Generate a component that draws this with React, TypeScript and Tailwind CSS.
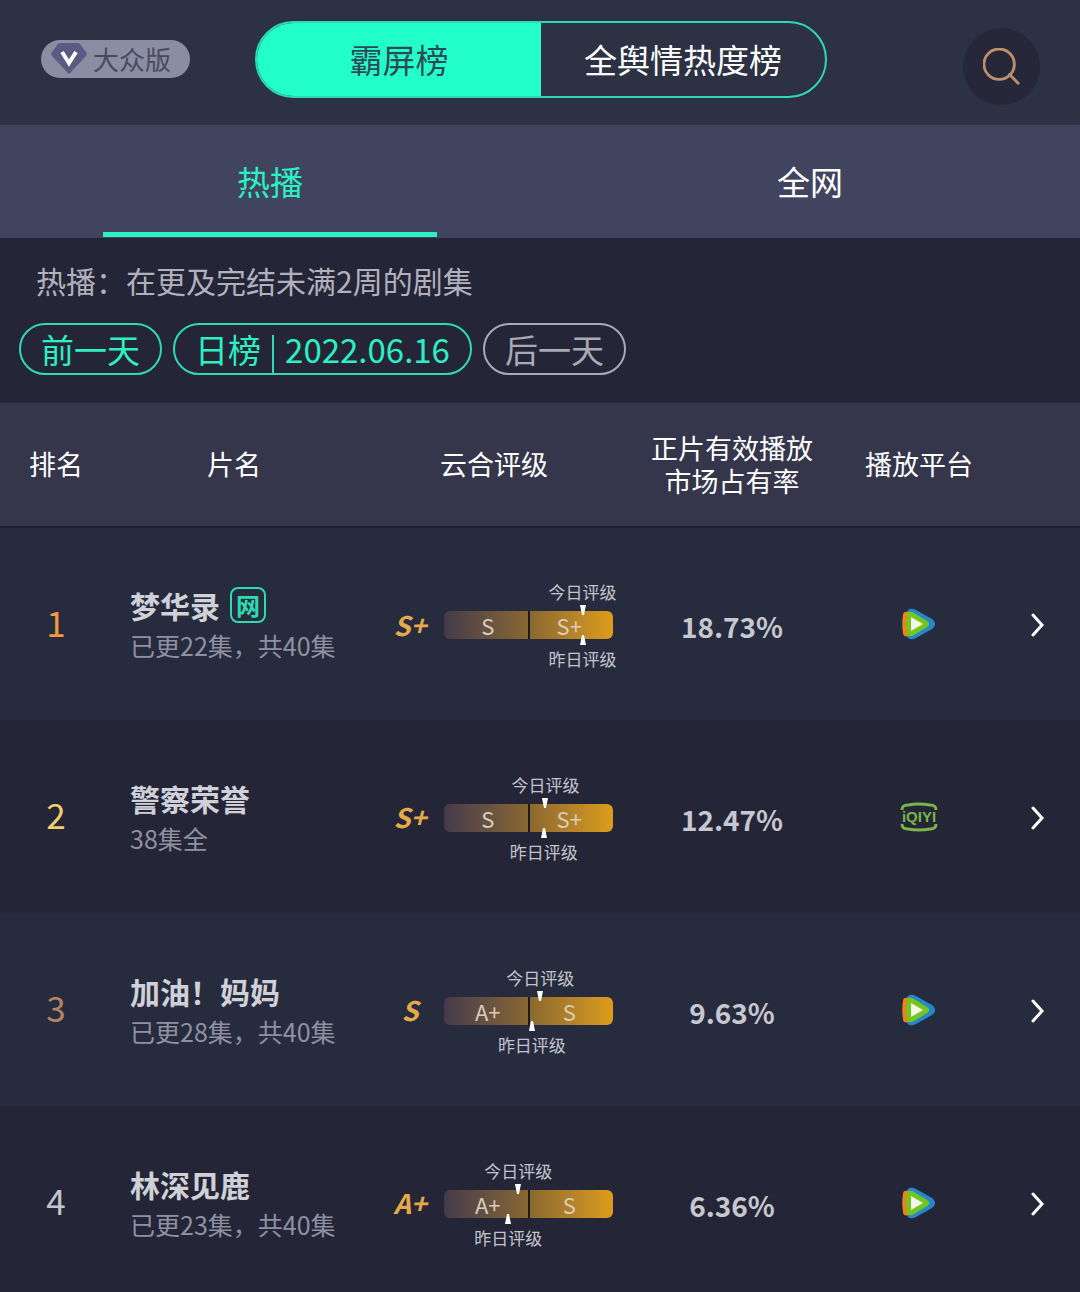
import React from 'react';

type Platform = 'tencent' | 'iqiyi';

interface Show {
  rank: number;
  rankColor: string;
  name: string;
  webOnly?: boolean;
  episodes: string;
  grade: string;
  scale: [string, string];
  // marker positions along the grade bar, in percent
  today: number;
  yesterday: number;
  share: string;
  platform: Platform;
}

const shows: Show[] = [
  { rank: 1, rankColor: 'text-[#f0983c]', name: '梦华录', webOnly: true, episodes: '已更22集，共40集', grade: 'S+', scale: ['S', 'S+'], today: 82, yesterday: 82, share: '18.73%', platform: 'tencent' },
  { rank: 2, rankColor: 'text-[#f2cf6b]', name: '警察荣誉', episodes: '38集全', grade: 'S+', scale: ['S', 'S+'], today: 60, yesterday: 59, share: '12.47%', platform: 'iqiyi' },
  { rank: 3, rankColor: 'text-[#b5835f]', name: '加油！妈妈', episodes: '已更28集，共40集', grade: 'S', scale: ['A+', 'S'], today: 57, yesterday: 52, share: '9.63%', platform: 'tencent' },
  { rank: 4, rankColor: 'text-[#c3c4cc]', name: '林深见鹿', episodes: '已更23集，共40集', grade: 'A+', scale: ['A+', 'S'], today: 44, yesterday: 38, share: '6.36%', platform: 'tencent' },
];

const VipIcon = () => (
  <svg viewBox="0 0 36 32" className="h-8 w-9" aria-hidden="true">
    <path d="M10 1h16c1 0 2 0 3 1l6 8c1 1 1 3 0 4L20 30c-1 2-3 2-4 0L1 14c-1-1-1-3 0-4l6-8c1-1 2-1 3-1z" fill="#5a5a82" />
    <path d="M11 10l7 11 7-11" fill="none" stroke="#fff" strokeWidth="4" />
  </svg>
);

const SearchIcon = () => (
  <svg viewBox="0 0 40 40" className="h-[38px] w-[38px]" fill="none" stroke="#bd9069" strokeWidth="3" strokeLinecap="round" aria-hidden="true">
    <circle cx="17" cy="17" r="16" />
    <path d="M28 28l9 9" />
  </svg>
);

const TencentIcon = () => (
  <svg viewBox="0 0 34 32" className="h-8 w-[34px]" role="img" aria-label="腾讯视频">
    <path d="M5 4c1-4 5-4 9-2l16 9c4 3 4 7 0 10l-16 9c-4 2-8 2-9-2z" fill="#2688cc" />
    <path d="M1 7c0-3 2-4 6-3l4 2v20l-4 2c-4 1-6 0-6-3-1-6-1-12 0-18z" fill="#e8851e" />
    <path d="M5 8c0-5 4-5 7-3l13 8c3 2 3 4 0 6l-13 8c-3 2-7 2-7-3-1-5-1-11 0-16z" fill="#76c51f" />
    <path d="M9 9l12 7-12 7z" fill="#f4f7e8" />
  </svg>
);

const IqiyiIcon = () => (
  <svg viewBox="0 0 38 30" className="h-[30px] w-[38px]" role="img" aria-label="爱奇艺">
    <g fill="none" stroke="#79b548" strokeWidth="3">
      <path d="M2 8c0-4 2-5 6-5q11-2 22 0c4 0 6 1 6 5" />
      <path d="M2 22c0 4 2 5 6 5q11 2 22 0c4 0 6-1 6-5" />
    </g>
    <text x="19" y="20" textAnchor="middle" fill="#79b548" className="font-['Liberation_Sans_Narrow','Liberation_Sans',sans-serif] text-[15px] font-bold">iQIYI</text>
  </svg>
);

const ChevronIcon = () => (
  <svg viewBox="0 0 14 24" className="h-6 w-3.5" fill="none" stroke="#fff" strokeWidth="3" aria-hidden="true">
    <path d="M2 2l9 10-9 10" strokeLinecap="round" />
  </svg>
);

const GradeBar: React.FC<{ show: Show }> = ({ show }) => (
  <div className="relative h-7 w-[169px]">
    <div className="flex h-full rounded-md bg-linear-to-r from-[#453a48] via-[#8a672f] to-[#dd9c18] text-center text-[22px] leading-7 text-[#d9cdb8]">
      <span className="flex-1 pl-1">{show.scale[0]}</span>
      <span className="w-0.5 bg-[#1c1a26]" />
      <span className="flex-1 pr-1">{show.scale[1]}</span>
    </div>
    <div className="absolute bottom-6 flex -translate-x-1/2 flex-col items-center" style={{ left: `${show.today}%` }}>
      <span className="text-[17px] leading-[26px] whitespace-nowrap text-[#c3c4cc]">今日评级</span>
      <svg viewBox="0 0 6 10" className="h-2.5 w-1.5"><path d="M0 0h6L4 10H2z" fill="#fff" /></svg>
    </div>
    <div className="absolute top-6 flex -translate-x-1/2 flex-col items-center" style={{ left: `${show.yesterday}%` }}>
      <svg viewBox="0 0 6 10" className="h-2.5 w-1.5"><path d="M2 0h2l2 10H0z" fill="#fff" /></svg>
      <span className="text-[17px] leading-7 whitespace-nowrap text-[#c3c4cc]">昨日评级</span>
    </div>
  </div>
);

const ShowRow: React.FC<{ show: Show }> = ({ show }) => (
  <tr className="h-[193px] odd:bg-[#262b3e] even:bg-[#242537]">
    <td className={`pb-1 text-center text-[35px] ${show.rankColor}`}>{show.rank}</td>
    <td className="pt-0.5 pl-[18px]">
      <div className="flex h-10 items-center gap-2.5">
        <span className="text-[30px] leading-10 font-bold whitespace-nowrap text-[#d0d1d8]">{show.name}</span>
        {show.webOnly && (
          <span className="flex h-9 w-9 items-center justify-center rounded-lg border-2 border-[#2fd9b4] text-2xl font-bold text-[#2fd9b4]">网</span>
        )}
      </div>
      <div className="text-[25px] leading-10 whitespace-nowrap text-[#8f91a3]">{show.episodes}</div>
    </td>
    <td className="pt-0.5">
      <div className="flex items-center pl-5">
        <span className="w-[68px] text-center text-[27px] font-bold text-[#e5a84b] italic">{show.grade}</span>
        <GradeBar show={show} />
      </div>
    </td>
    <td className="pt-1 text-center text-[28px] font-bold text-[#c6c7d0]">{show.share}</td>
    <td>
      <div className="flex justify-center">
        {show.platform === 'tencent' ? <TencentIcon /> : <IqiyiIcon />}
      </div>
    </td>
    <td className="pt-0.5">
      <button type="button" aria-label={`查看${show.name}`} className="ml-[25px] flex items-center">
        <ChevronIcon />
      </button>
    </td>
  </tr>
);

const App: React.FC = () => (
  <div className="flex h-screen flex-col overflow-hidden bg-[#242537] font-['Noto_Sans_CJK_SC',sans-serif] text-white">
    {/* Top bar */}
    <header className="flex h-[125px] shrink-0 items-start bg-[#2c3143] pr-10 pl-[41px]">
      <button type="button" className="mt-10 mr-[65px] flex h-[38px] w-[149px] items-center gap-1.5 rounded-full bg-[#8b8da2] pb-0.5 pl-2.5 text-[26px] whitespace-nowrap text-[#484a60]">
        <VipIcon />
        大众版
      </button>
      <div className="mt-[21px] flex h-[77px] w-[572px] overflow-hidden rounded-full border-2 border-[#2fd9b4] text-[33px]">
        <button type="button" className="flex-1 bg-[#22ffcb] text-[#2b4a55]">霸屏榜</button>
        <button type="button" className="flex-1">全舆情热度榜</button>
      </div>
      <button type="button" aria-label="搜索" className="mt-7 ml-auto flex h-[77px] w-[77px] items-center justify-center rounded-full bg-[#26283a]">
        <SearchIcon />
      </button>
    </header>

    {/* Tabs */}
    <nav className="flex h-[113px] shrink-0 bg-[#40445e] text-[33px]">
      <button type="button" className="flex flex-1 flex-col items-center justify-between text-[#2cf0c4]">
        <span className="flex-1 content-center pt-1.5">热播</span>
        <span className="mb-px h-[5px] w-[62%] bg-[#2cf0c4]" />
      </button>
      <button type="button" className="flex-1">全网</button>
    </nav>

    {/* Date filter */}
    <section className="h-[165px] shrink-0 pt-5 pl-[19px]">
      <p className="pl-[17px] text-[30px] leading-[45px] text-[#b0b1bd]">热播：在更及完结未满2周的剧集</p>
      <div className="mt-5 flex gap-[11px] text-[33px] leading-[48px] whitespace-nowrap">
        <button type="button" className="h-[52px] w-[143px] rounded-full border-2 border-[#2fd9b4] text-[#2cf0c4]">前一天</button>
        <button type="button" className="flex h-[52px] w-[299px] items-center justify-center gap-[11px] rounded-full border-2 border-[#2fd9b4] text-[#2cf0c4]">
          日榜
          <span className="h-[38px] w-0.5 self-end bg-[#2fd9b4]" />
          2022.06.16
        </button>
        <button type="button" className="h-[52px] w-[143px] rounded-full border-2 border-[#a9aab6] text-[#a9aab6]">后一天</button>
      </div>
    </section>

    {/* Ranking list */}
    <main className="min-h-0 flex-1 overflow-y-auto [scrollbar-width:none]">
      <table className="w-full table-fixed border-collapse">
        <colgroup>
          <col className="w-[112px]" />
          <col className="w-[244px]" />
          <col className="w-[276px]" />
          <col className="w-[200px]" />
          <col className="w-[174px]" />
          <col className="w-[74px]" />
        </colgroup>
        <thead>
          <tr className="h-[124px] border-b-2 border-[#1f2032] bg-[#35364b] text-[27px] leading-[33px]">
            <th className="pb-0.5 font-normal">排名</th>
            <th className="pb-0.5 font-normal">片名</th>
            <th className="pb-0.5 font-normal">云合评级</th>
            <th className="pb-0.5 font-normal">正片有效播放<br />市场占有率</th>
            <th className="pb-0.5 font-normal">播放平台</th>
            <th aria-label="详情" />
          </tr>
        </thead>
        <tbody>
          {shows.map((show) => (
            <ShowRow key={show.rank} show={show} />
          ))}
        </tbody>
      </table>
    </main>
  </div>
);

export default App;
